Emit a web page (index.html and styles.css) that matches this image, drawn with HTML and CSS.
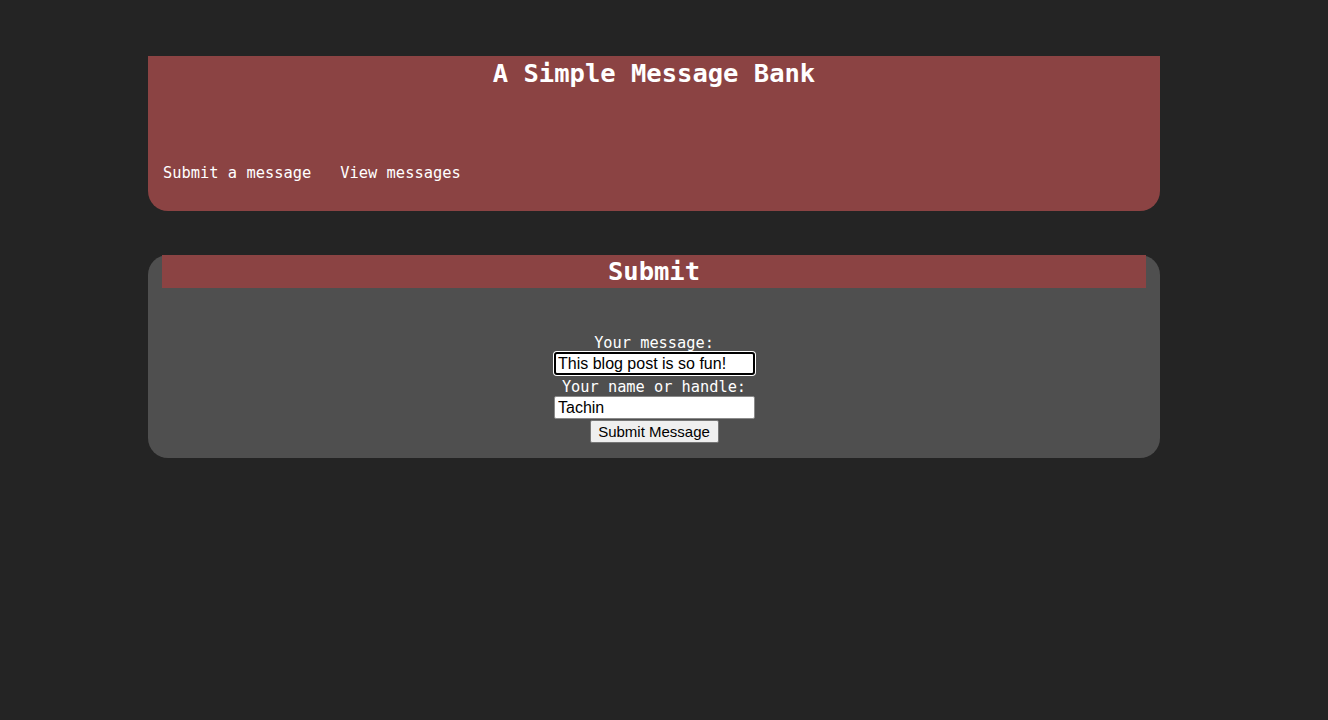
FILE: index.html
```html
<!DOCTYPE html>
<html>
<head>
<meta charset="utf-8">
<title>A Simple Message Bank</title>
<link rel="stylesheet" href="styles.css">
</head>
<body>
<div class="page">
  <header class="header">
    <h1 class="title">A Simple Message Bank</h1>
    <nav class="nav">
      <a class="nav-link" href="#">Submit a message</a>
      <a class="nav-link" href="#">View messages</a>
    </nav>
  </header>
  <section class="panel">
    <h2 class="panel-title">Submit</h2>
    <form class="form">
      <label class="label" for="msg">Your message:</label>
      <input class="field focused" id="msg" type="text" value="This blog post is so fun!">
      <label class="label label-next" for="name">Your name or handle:</label>
      <input class="field" id="name" type="text" value="Tachin">
      <button class="btn" type="button">Submit Message</button>
    </form>
  </section>
</div>
</body>
</html>
```
FILE: styles.css
```css
html, body {
  margin: 0;
  padding: 0;
  background: #242424;
}
body {
  font-family: "DejaVu Sans Mono", "Liberation Mono", monospace;
  color: #ffffff;
}
.page {
  width: 1012px;
  margin: 0 0 0 148px;
  padding-top: 56px;
}
.header {
  background: #8b4343;
  border-radius: 0 0 20px 20px;
  height: 155px;
  box-sizing: border-box;
  padding: 0 15px;
  display: flex;
  flex-direction: column;
}
.title {
  margin: 0;
  font-size: 25.5px;
  line-height: 34px;
  font-weight: bold;
  text-align: center;
}
.nav {
  margin-top: 73px;
  display: flex;
  gap: 29px;
  font-size: 15.4px;
  line-height: 20px;
}
.nav-link {
  color: #ffffff;
  text-decoration: none;
}
.panel {
  margin-top: 44px;
  background: #4f4f4f;
  border-radius: 20px;
  padding: 0 14px 15px;
}
.panel-title {
  margin: 0;
  background: #8b4343;
  font-size: 25.5px;
  line-height: 33px;
  font-weight: bold;
  text-align: center;
}
.form {
  display: flex;
  flex-direction: column;
  align-items: center;
  padding-top: 46px;
}
.label {
  font-size: 15.3px;
  line-height: 18px;
}
.label-next {
  padding-top: 3px;
}
.field {
  box-sizing: border-box;
  width: 201px;
  height: 23px;
  margin: 0 0 0 1px;
  padding: 1px 3px;
  border: 1px solid #8a8a8a;
  border-radius: 2px;
  background: #ffffff;
  color: #000000;
  font-family: "Liberation Sans", Arial, sans-serif;
  font-size: 16px;
  outline: none;
}
.field.focused {
  border: 2px solid #000000;
  border-radius: 3px;
  box-shadow: 0 0 0 1px #ffffff;
  padding: 0 2px;
}
.btn {
  margin-top: 1px;
  box-sizing: border-box;
  width: 129px;
  height: 23px;
  padding: 0;
  border: 1px solid #767676;
  border-radius: 2px;
  background: #efefef;
  color: #000000;
  font-family: "Liberation Sans", Arial, sans-serif;
  font-size: 15px;
}
```
